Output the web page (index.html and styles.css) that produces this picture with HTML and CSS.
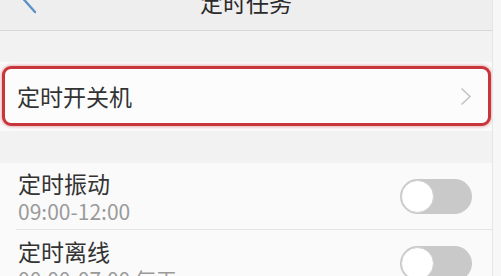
FILE: index.html
```html
<!DOCTYPE html>
<html lang="zh-CN">
<head>
  <meta charset="UTF-8">
  <meta name="viewport" content="width=device-width, initial-scale=1.0">
  <title>定时任务</title>
  <link rel="stylesheet" href="styles.css">
</head>
<body>
  <div class="screen">
    <!-- Top bar -->
    <header class="topbar">
      <svg class="back" width="40" height="16" viewBox="0 0 40 16">
        <polyline points="30,-18 19,-6 35,12" fill="none" stroke="#5b92c8" stroke-width="2.4" stroke-linecap="round" stroke-linejoin="round"/>
      </svg>
      <h1 class="title">定时任务</h1>
      <span></span>
    </header>

    <!-- Power on/off group -->
    <section class="group group-first">
      <div class="row link highlight">
        <span class="row-title">定时开关机</span>
        <svg class="chevron" width="12" height="19" viewBox="0 0 12 19">
          <polyline points="1.5,1.5 10,9.5 1.5,17.5" fill="none" stroke="#c4c4c4" stroke-width="1.6"/>
        </svg>
      </div>
    </section>

    <!-- Switch group -->
    <section class="group">
      <div class="row switch-row">
        <div class="row-text">
          <div class="row-title">定时振动</div>
          <div class="row-sub">09:00-12:00</div>
        </div>
        <span class="toggle"></span>
      </div>
      <div class="row switch-row">
        <div class="row-text">
          <div class="row-title">定时离线</div>
          <div class="row-sub">00:00-07:00 每天</div>
        </div>
        <span class="toggle"></span>
      </div>
    </section>
  </div>
</body>
</html>
```

FILE: styles.css
```css
/* General */
body {
  margin: 0;
  background-color: #f7f7f7;
  font-family: "Noto Sans CJK SC", "Noto Sans", sans-serif;
  color: #333;
  overflow: hidden;
}

.screen {
  width: 492px;
  height: 276px;
  background-color: #f2f2f2;
  border-right: 1px solid #e6e6e6;
  overflow: hidden;
}

/* Top bar */
.topbar {
  height: 30px;
  display: grid;
  grid-template-columns: 60px 1fr 60px;
  background-color: #eeeeee;
  border-bottom: 1px solid #d9d9d9;
  overflow: hidden;
}

.back {
  display: block;
}

.title {
  margin: -12px 0 0;
  font-size: 23px;
  font-weight: normal;
  line-height: 28px;
  text-align: center;
  color: #2a2a2a;
}

/* Groups */
.group {
  background-color: #fafafa;
  margin-top: 32px;
}

.group-first {
  margin-top: 31px;
  padding: 4px 1px 5px 2px;
}

.row {
  display: flex;
  align-items: center;
  justify-content: space-between;
}

.row-title {
  font-size: 23px;
  line-height: 28px;
}

/* Red highlighted entry */
.highlight {
  height: 54px;
  padding: 0 16px 0 12px;
  border: 3px solid #c8363d;
  border-radius: 9px;
  background-color: #fcfcfc;
  box-shadow: 0 0 3px 1px rgba(214, 90, 96, 0.45);
}

.chevron {
  display: block;
}

/* Rows with switches */
.switch-row {
  height: 67px;
  margin-left: 16px;
  padding: 0 20px 0 2px;
  border-bottom: 1px solid #e4e4e4;
  box-sizing: border-box;
}

.switch-row + .switch-row {
  height: 68px;
}

.row-sub {
  font-size: 21px;
  line-height: 24px;
  margin-top: 2px;
  color: #9a9a9a;
}

.toggle {
  width: 72px;
  height: 35px;
  border-radius: 18px;
  background-color: #c9c9c9;
  display: flex;
  align-items: center;
}

.toggle::before {
  content: "";
  width: 31px;
  height: 31px;
  margin-left: 1px;
  border-radius: 50%;
  background-color: #fff;
  border: 1px solid #d0d0d0;
}
```
